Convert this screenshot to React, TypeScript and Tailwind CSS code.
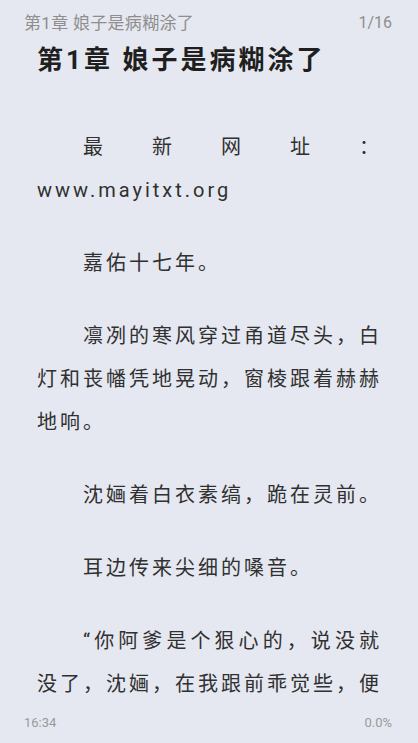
// page content as paginated by the reader: this page stops at "便"
const paragraphs = [
  '最新网址：www.mayitxt.org',
  '嘉佑十七年。',
  '凛冽的寒风穿过甬道尽头，白灯和丧幡凭地晃动，窗棱跟着赫赫地响。',
  '沈婳着白衣素缟，跪在灵前。',
  '耳边传来尖细的嗓音。',
  '“你阿爹是个狠心的，说没就没了，沈婳，在我跟前乖觉些，便',
];

const App = () => {
  return (
    <div
      className="flex h-[743px] w-[418px] flex-col overflow-hidden bg-[#e5e8f0]"
      style={{ fontFamily: 'Roboto, "Noto Sans CJK SC", sans-serif' }}
    >
      {/* top status line */}
      <div className="flex h-[40px] shrink-0 items-start justify-between pl-[24px] pr-[26px] pt-[13px] text-[17px] leading-[20px] text-[#8e8e8e]">
        <span className="tracking-[0.3px]">第1章 娘子是病糊涂了</span>
        <span className="text-[16px]">1/16</span>
      </div>

      <h1 className="h-[40px] shrink-0 pl-[37px] text-[26px] font-bold leading-[40px] tracking-[3px] text-[#1f1f1f]">
        第1章 娘子是病糊涂了
      </h1>

      <div className="min-h-0 flex-1 overflow-hidden pl-[37px] pr-[36px] pt-[46px]">
        {paragraphs.map((p, i) => (
          <p
            key={i}
            className={`indent-[46px] text-[20px] leading-[43px] tracking-[3px] text-[#303030] ${
              i === paragraphs.length - 1 ? 'text-justify [text-align-last:justify]' : 'mb-[30px] text-justify'
            }`}
          >
            {p}
          </p>
        ))}
      </div>

      {/* bottom status line */}
      <div className="flex h-[40px] shrink-0 items-start justify-between pl-[24px] pr-[26px] pt-[10px] text-[13px] leading-[20px] text-[#9a9a9a]">
        <span>16:34</span>
        <span>0.0%</span>
      </div>
    </div>
  );
};

export default App;
